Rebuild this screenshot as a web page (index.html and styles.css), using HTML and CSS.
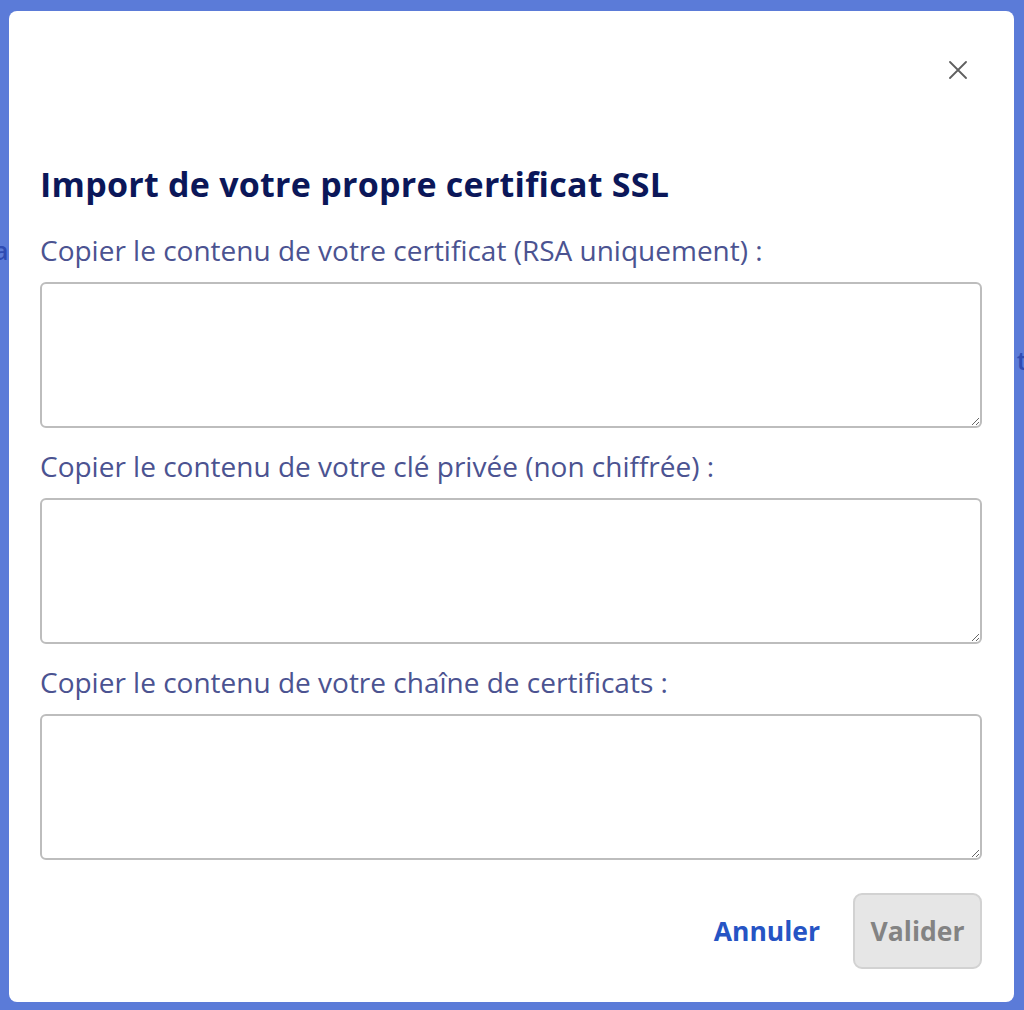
FILE: index.html
```html
<!DOCTYPE html><html lang="fr"><head><meta charset="UTF-8"/>
<meta name="viewport" content="width=device-width, initial-scale=1" />
<title>Import certificat SSL</title>
<link rel="stylesheet" href="styles.css"></head><body>

<!-- page derrière le voile -->
<div class="page">
  <div class="page-row r1"><span class="cut-l">Formula</span></div>
  <div class="page-row r2"><span class="cut-l">Actions</span><span class="cut-r">tarif</span></div>
</div>

<!-- fenêtre modale -->
<div class="modal" role="dialog" aria-labelledby="mTitle">
  <div class="modal-top">
    <button class="close" title="Fermer">
      <svg width="18" height="18" viewBox="0 0 18 18"><path d="M1 1L17 17M17 1L1 17" stroke="#5f5f5f" stroke-width="1.8" stroke-linecap="round"/></svg>
    </button>
  </div>

  <h1 id="mTitle" class="title">Import de votre propre certificat SSL</h1>

  <label class="field">
    <span class="lbl">Copier le contenu de votre certificat (RSA uniquement) :</span>
    <textarea></textarea>
  </label>
  <label class="field">
    <span class="lbl">Copier le contenu de votre clé privée (non chiffrée) :</span>
    <textarea></textarea>
  </label>
  <label class="field">
    <span class="lbl">Copier le contenu de votre chaîne de certificats :</span>
    <textarea></textarea>
  </label>

  <div class="actions">
    <button class="btn-link">Annuler</button>
    <button class="btn-main" disabled>Valider</button>
  </div>
</div>

</body></html>
```

FILE: styles.css
```css
/* ───── base ───── */
*{box-sizing:border-box;margin:0;padding:0}
html,body{height:100%}
body{font-family:"Open Sans","Noto Sans",Arial,sans-serif;background:#5b7bd8;overflow:hidden;position:relative}

/* ───── page en fond ───── */
.page{padding-top:232px}
.page-row{display:flex;justify-content:space-between;font-size:26px;font-weight:600;color:#2f4cb3;height:110px;overflow:hidden}
.cut-l{margin-left:-96px}
.cut-r{margin-left:auto;margin-right:-46px}

/* ───── modale ───── */
.modal{position:absolute;left:9px;top:11px;width:1005px;height:991px;background:#fff;
       border-radius:8px;padding:0 32px 33px 31px;display:flex;flex-direction:column}
.modal-top{display:flex;justify-content:flex-end;padding-top:48px;margin-right:13px;height:98px}
.close{background:none;border:none;cursor:pointer;width:22px;height:22px;display:flex;align-items:center;justify-content:center}
.title{font-size:34px;font-weight:700;color:#0b1759;line-height:40px;margin-top:55px;letter-spacing:.25px}

/* champs */
.field{display:flex;flex-direction:column;margin-top:21px}
.title + .field{margin-top:29px}
.lbl{font-size:28px;color:#4b5391;line-height:35px;margin-bottom:14px}
.field textarea{height:146px;border:2px solid #bdbdbd;border-radius:6px;resize:vertical;
                font:inherit;padding:8px 12px;background:#fff}

/* boutons */
.actions{margin-top:auto;display:flex;justify-content:flex-end;align-items:center;gap:33px}
.btn-link{background:none;border:none;color:#2654c4;font:inherit;font-size:26.5px;font-weight:700;cursor:pointer}
.btn-main{width:129px;height:76px;border-radius:9px;border:2px solid #d2d2d2;background:#e6e6e6;
          color:#838383;font:inherit;font-size:26.5px;font-weight:700}
```
